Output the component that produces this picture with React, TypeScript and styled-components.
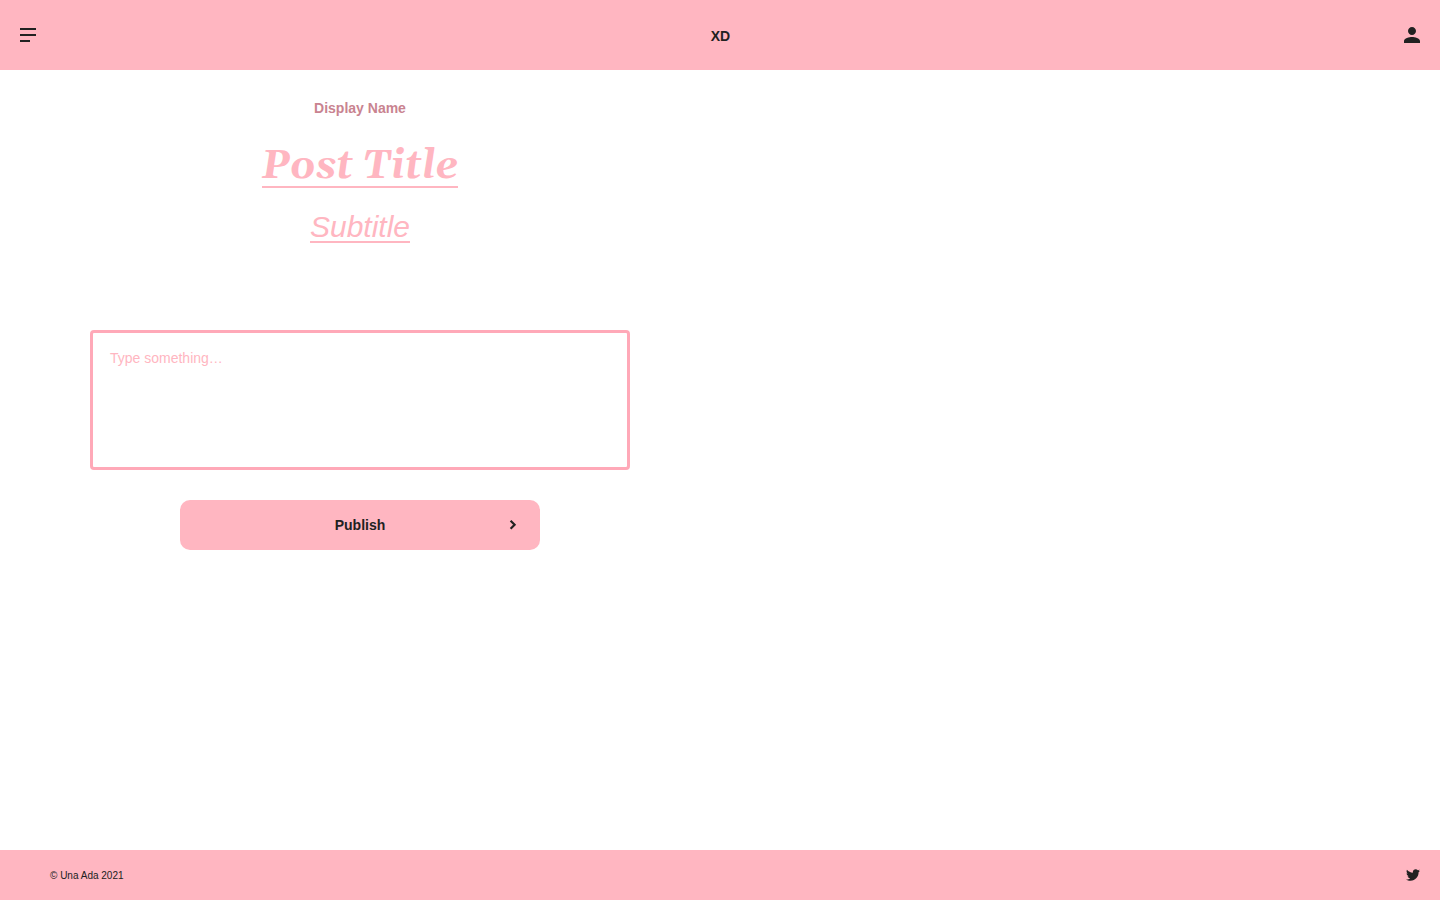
import React from 'react';
import styled, { createGlobalStyle } from 'styled-components';
import { MdPerson } from 'react-icons/md';
import { FaTwitter } from 'react-icons/fa';

const pink = '#ffb6c1';
const ink = '#212121';

const GlobalStyle = createGlobalStyle`
  *, *::before, *::after { box-sizing: border-box; }
  body {
    margin: 0;
    background: #fff;
    color: ${ink};
    font-family: "Liberation Sans", Arial, sans-serif;
    font-size: 14px;
  }
  button { font: inherit; color: inherit; border: 0; padding: 0; background: none; }
`;

const Page = styled.div`
  display: flex;
  flex-direction: column;
  min-height: 100vh;
`;

const Header = styled.header`
  display: grid;
  grid-template-columns: 1fr auto 1fr;
  align-items: center;
  height: 70px;
  padding: 0 16px 0 20px;
  background: ${pink};
`;

const IconButton = styled.button<{ $end?: boolean }>`
  display: flex;
  justify-self: ${({ $end }) => ($end ? 'end' : 'start')};
`;

const Brand = styled.span`
  margin-left: -3px;
  padding-top: 1px;
  font-weight: 700;
  line-height: 20px;
`;

const Main = styled.main`
  flex: 1;
  display: flex;
`;

const Editor = styled.section`
  display: flex;
  flex-direction: column;
  align-items: center;
  width: 50%;
  padding: 28px 90px 0;
`;

const Author = styled.p`
  margin: 0;
  font-weight: 700;
  line-height: 20px;
  color: #c98390;
`;

const Title = styled.h1`
  margin: 20px 0 0;
  height: 50px;
  font: italic 700 40px/58px Georgia, Gelasio, "Liberation Serif", serif;
  color: ${pink};
  border-bottom: 2px solid ${pink};
`;

const Subtitle = styled.h2`
  margin: 20px 0 0;
  height: 35px;
  font-size: 30px;
  font-style: italic;
  font-weight: 400;
  line-height: 38px;
  color: ${pink};
  border-bottom: 2px solid ${pink};
`;

const Body = styled.textarea`
  display: block;
  width: 100%;
  height: 140px;
  margin: 87px 0 30px;
  padding: 15px 17px;
  border: 3px solid #ffa9b8;
  border-radius: 4px;
  resize: none;
  outline: none;
  background: #fff;
  font: 14px/20px "Liberation Sans", Arial, sans-serif;
  &::placeholder { color: ${pink}; opacity: 1; }
`;

const Publish = styled.button`
  display: grid;
  grid-template-columns: 1fr auto 1fr;
  align-items: center;
  width: 360px;
  height: 50px;
  padding: 0 23px;
  border-radius: 10px;
  background: ${pink};
  font-weight: 700;
  svg { grid-column: 3; justify-self: end; }
`;

const PublishLabel = styled.span`
  grid-column: 2;
`;

const Footer = styled.footer`
  display: flex;
  align-items: center;
  justify-content: space-between;
  height: 50px;
  padding: 0 20px 0 50px;
  background: ${pink};
  font-size: 10px;
`;

export default function App() {
  return (
    <>
      <GlobalStyle />
      <Page>
        <Header>
          <IconButton aria-label="Menu">
            <svg width="16" height="14" viewBox="0 0 16 14" fill={ink}>
              <path d="M0 0h16v2H0zM0 6h16v2H0zM0 12h10v2H0z" />
            </svg>
          </IconButton>
          <Brand>XD</Brand>
          <IconButton $end aria-label="Account">
            <MdPerson size={24} />
          </IconButton>
        </Header>
        <Main>
          <Editor>
            <Author>Display Name</Author>
            <Title>Post Title</Title>
            <Subtitle>Subtitle</Subtitle>
            <Body placeholder="Type something…" />
            <Publish>
              <PublishLabel>Publish</PublishLabel>
              <svg width="8" height="10" viewBox="0 0 8 10" fill="none" stroke={ink} strokeWidth="2.2">
                <path d="M1.6 .8 5.6 4.8 1.6 8.8" />
              </svg>
            </Publish>
          </Editor>
        </Main>
        <Footer>
          <span>© Una Ada 2021</span>
          <FaTwitter size={14} />
        </Footer>
      </Page>
    </>
  );
}
